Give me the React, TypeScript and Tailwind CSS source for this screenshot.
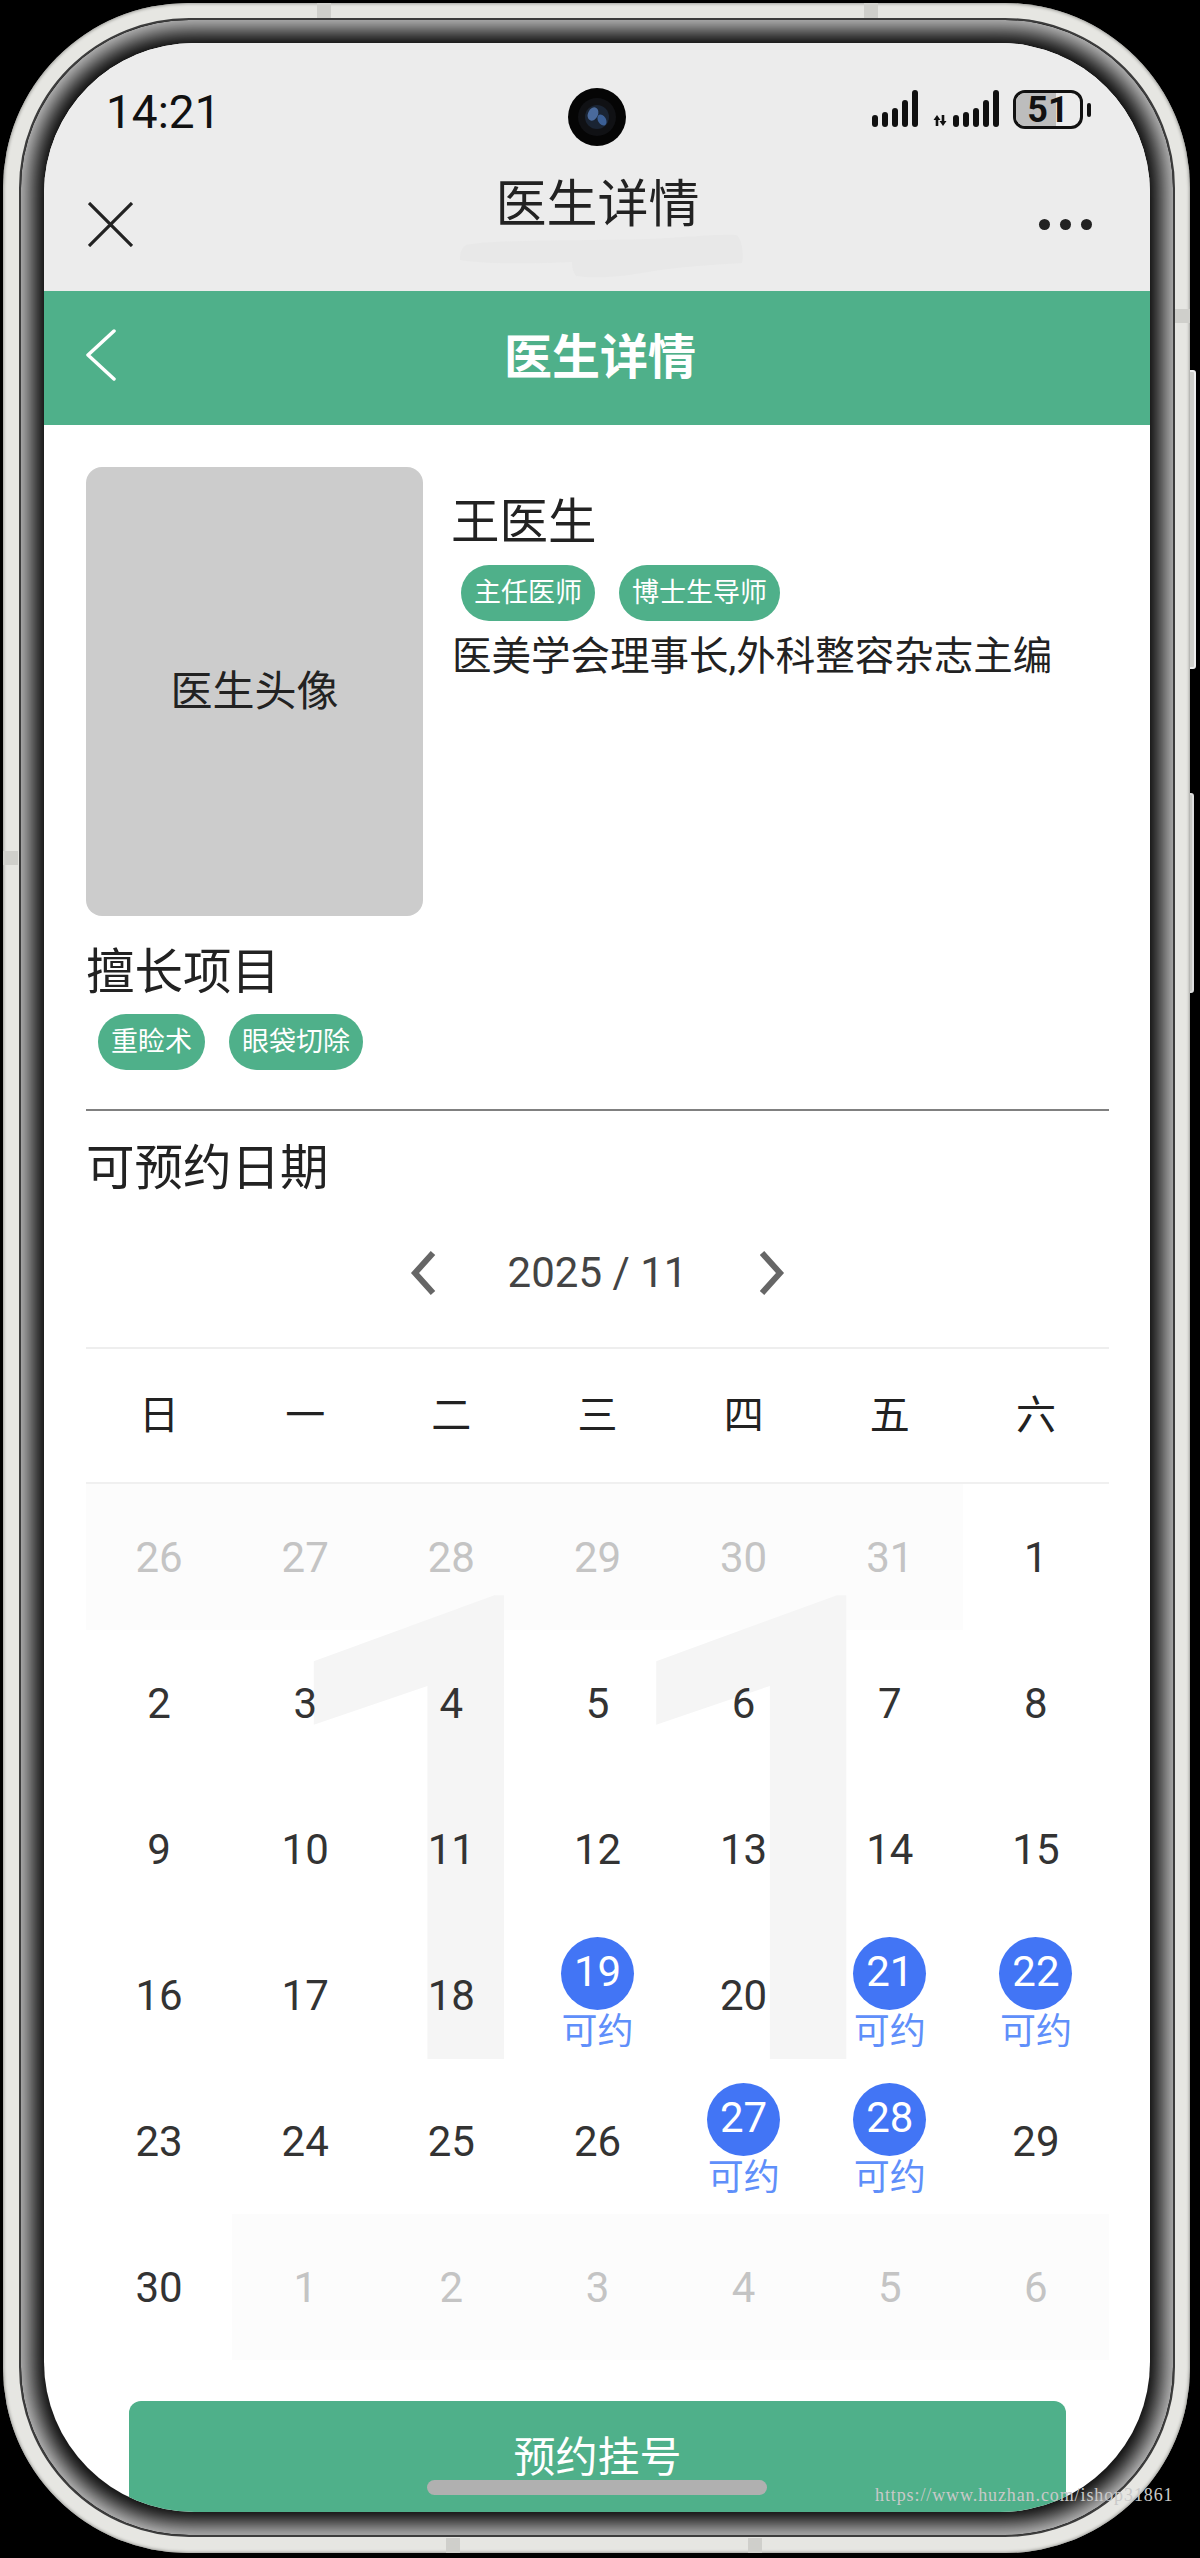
const rows: (number | string)[][] = [
  ["x26", "x27", "x28", "x29", "x30", "x31", 1],
  [2, 3, 4, 5, 6, 7, 8],
  [9, 10, 11, 12, 13, 14, 15],
  [16, 17, 18, 19, 20, 21, 22],
  [23, 24, 25, 26, 27, 28, 29],
  [30, "x1", "x2", "x3", "x4", "x5", "x6"],
];
const bookable = [19, 21, 22, 27, 28];
const week = ["日", "一", "二", "三", "四", "五", "六"];

function Tag({ children }: { children: React.ReactNode }) {
  return (
    <span className="flex h-[56px] items-center rounded-full bg-[#4fb08a] px-[13px] text-[27px] leading-none text-white">
      {children}
    </span>
  );
}

function DayCell({ value }: { value: number | string }) {
  if (typeof value === "string") {
    return (
      <div className="flex h-[146px] items-center justify-center bg-black/[0.012] text-[42px] text-[#c4c4c4]">
        {value.slice(1)}
      </div>
    );
  }
  if (bookable.includes(value)) {
    return (
      <div className="relative flex h-[146px] flex-col items-center pt-[15px]">
        <div className="flex h-[73px] w-[73px] items-center justify-center rounded-full bg-[#4275f5] pb-[4px] text-[42px] text-white">
          {value}
        </div>
        <div className="mt-[2px] text-[36px] leading-[40px] text-[#5f8ffa]">可约</div>
      </div>
    );
  }
  return (
    <div className="relative flex h-[146px] items-center justify-center text-[42px] text-[#333]">
      {value}
    </div>
  );
}

function Bars({ x, heights }: { x: number; heights: number[] }) {
  return (
    <>
      {heights.map((h, i) => (
        <rect key={i} x={x + i * 10} y={37 - h} width="6" height={h} rx="3" fill="#111" />
      ))}
    </>
  );
}

function StatusIcons() {
  return (
    <div className="flex items-start">
      <svg width="136" height="40" viewBox="0 0 136 40">
        <Bars x={1} heights={[12, 15, 19, 27, 37]} />
        <path d="M66 25l3.500 5h-2.200v6h-2.600v-6H62.500z" fill="#111" />
        <path d="M72 36l-3.500-5h2.200v-6h2.600v6h2.200z" fill="#111" />
        <Bars x={82} heights={[12, 15, 19, 27, 37]} />
      </svg>
      <div className="relative ml-[6px] flex h-[39px] w-[70px] items-center justify-center overflow-hidden rounded-[12px] border-[3px] border-[#111] text-[36px] font-bold leading-none text-[#111]">
        <div className="absolute inset-y-0 left-0 w-[40px] bg-[#bdbdbd]" />
        <span className="relative">51</span>
      </div>
      <div className="ml-[4px] mt-[13px] h-[14px] w-[4px] rounded-full bg-[#111]" />
    </div>
  );
}

export default function App() {
  return (
    <div
      className="relative h-[2558px] w-[1200px] overflow-hidden bg-black pl-[3px] pt-[3px]"
      style={{ fontFamily: 'Roboto, "Noto Sans CJK SC", sans-serif' }}
    >
      {/* side keys */}
      <div className="absolute left-[1186px] top-[370px] h-[299px] w-[10px] rounded-[3px] border-2 border-[#eee] bg-[#cfcfcb]" />
      <div className="absolute left-[1186px] top-[793px] h-[200px] w-[8px] rounded-[3px] border-2 border-[#ddd] bg-[#c8c8c4]" />

      {/* phone frame */}
      <div className="relative h-[2550px] w-[1187px] rounded-[185px] bg-[#e6e6e2] pb-[16px] pl-[16px] pr-[15px] pt-[15px] shadow-[inset_0_0_3px_1px_#a0a09c]">
        <div className="absolute left-[314px] top-0 h-[15px] w-[14px] bg-[#cfcfcb]" />
        <div className="absolute left-[861px] top-0 h-[15px] w-[14px] bg-[#cfcfcb]" />
        <div className="absolute left-[443px] bottom-0 h-[15px] w-[14px] bg-[#cfcfcb]" />
        <div className="absolute left-[745px] bottom-0 h-[15px] w-[14px] bg-[#cfcfcb]" />
        <div className="absolute left-0 top-[848px] h-[14px] w-[15px] bg-[#cfcfcb]" />
        <div className="absolute right-0 top-[306px] h-[14px] w-[15px] bg-[#cfcfcb]" />

        <div className="h-full w-full rounded-[170px] border-2 border-[#3c3c3c] bg-black p-[23px] shadow-[inset_0_0_24px_10px_#d0d0d0]">
          {/* screen */}
          <div className="relative h-full w-full overflow-hidden rounded-[150px] bg-white">
            {/* wechat title area */}
            <div className="relative h-[248px] bg-[#ececec]">
              <div className="flex h-[141px] items-start justify-between pl-[62px] pr-[59px] pt-[46px]">
                <span className="text-[46px] leading-[46px] text-[#111]">14:21</span>
                <div className="mt-[1px]">
                  <StatusIcons />
                </div>
              </div>
              <div className="flex h-[80px] items-center pl-[44px] pr-[58px]">
                <svg width="45" height="45" viewBox="0 0 45 45" stroke="#222" strokeWidth="3.200" fill="none">
                  <path d="M1 1l43 43M44 1L1 44" />
                </svg>
                <span className="-mt-[40px] ml-[23px] flex-1 text-center text-[51px] leading-none text-[#222]">医生详情</span>
                <div className="flex gap-[10px]">
                  <span className="h-[11px] w-[11px] rounded-full bg-[#222]" />
                  <span className="h-[11px] w-[11px] rounded-full bg-[#222]" />
                  <span className="h-[11px] w-[11px] rounded-full bg-[#222]" />
                </div>
              </div>
              {/* painted-out subtitle */}
              <svg className="absolute left-[414px] top-[188px]" width="290" height="50" viewBox="0 0 290 50" fill="#e8e8e8">
                <path d="M8 14C40 8 130 10 190 8c30-1 70-5 88-4 6 2 8 20 6 28-30 2-70 4-100 10-30 5-50 5-66 3-4-6-4-10-4-14-40 2-90 2-112-2C2 24 2 18 8 14z" />
              </svg>
              {/* front camera */}
              <svg className="absolute left-[524px] top-[45px]" width="58" height="58" viewBox="0 0 58 58">
                <circle cx="29" cy="29" r="29" fill="#050505" />
                <circle cx="29" cy="29" r="19" fill="#101114" />
                <circle cx="29" cy="29" r="12" fill="#1a2433" />
                <ellipse cx="25" cy="26" rx="5" ry="7" fill="#4a6a9c" transform="rotate(25 25 26)" />
                <ellipse cx="34" cy="32" rx="4" ry="6" fill="#3b5f95" transform="rotate(-30 34 32)" />
              </svg>
            </div>

            {/* green header */}
            <div className="flex h-[134px] items-center bg-[#4fb08a] pl-[42px]">
              <svg className="-mt-[6px]" width="30" height="52" viewBox="0 0 30 52" stroke="#fff" strokeWidth="3.500" strokeLinecap="round" strokeLinejoin="round" fill="none">
                <path d="M28 2L2 26l26 24" />
              </svg>
              <span className="flex-1 text-center text-[48px] font-bold leading-none text-white">医生详情</span>
              <div className="w-[66px]" />
            </div>

            <div className="pl-[42px] pr-[41px] pt-[42px] text-[#222]">
              {/* doctor info */}
              <div className="flex gap-[28px]">
                <div className="flex h-[449px] w-[337px] shrink-0 items-center justify-center rounded-[16px] bg-[#cccccc] text-[42px] text-[#222]">
                  医生头像
                </div>
                <div className="pt-[32px]">
                  <div className="text-[48.500px] leading-[48px]">王医生</div>
                  <div className="ml-[10px] mt-[18px] flex gap-[24px]">
                    <Tag>主任医师</Tag>
                    <Tag>博士生导师</Tag>
                  </div>
                  <div className="ml-[1px] mt-[16px] text-[39.500px] leading-[39px]">医美学会理事长,外科整容杂志主编</div>
                </div>
              </div>

              <div className="mt-[33px] text-[48.500px] leading-[48px]">擅长项目</div>
              <div className="ml-[12px] mt-[17px] flex gap-[24px]">
                <Tag>重睑术</Tag>
                <Tag>眼袋切除</Tag>
              </div>
              <div className="mt-[39px] h-[2px] bg-[#808080]" />

              <div className="mt-[34px] text-[48.500px] leading-[48px]">可预约日期</div>

              {/* month switcher */}
              <div className="mt-[58px] flex h-[44px] items-center justify-center">
                <svg width="26" height="44" viewBox="0 0 26 44" stroke="#666" strokeWidth="6" fill="none">
                  <path d="M23 2L5 22l18 20" />
                </svg>
                <span className="mx-[72px] text-[42px] leading-none text-[#444]">2025 / 11</span>
                <svg width="26" height="44" viewBox="0 0 26 44" stroke="#666" strokeWidth="6" fill="none">
                  <path d="M3 2l18 20L3 42" />
                </svg>
              </div>
              <div className="mt-[52px] h-[2px] bg-[#eeeeee]" />

              {/* calendar */}
              <div className="grid h-[135px] grid-cols-7 items-center border-b-2 border-[#f0f0f0] text-center text-[40px] leading-none text-[#222]">
                {week.map((d) => (
                  <div key={d}>{d}</div>
                ))}
              </div>
              <div className="relative grid grid-cols-7">
                <div className="pointer-events-none absolute left-[174px] top-[28px] select-none text-[650px] font-[550] leading-none tracking-[-27px] text-[#f5f5f5]">
                  11
                </div>
                {rows.flat().map((v, i) => (
                  <DayCell key={i} value={v} />
                ))}
              </div>

              <div className="mx-[43px] mt-[41px] flex h-[112px] items-center justify-center rounded-[12px] bg-[#4fb08a] pt-[2px] text-[42px] leading-none text-white">
                预约挂号
              </div>
            </div>

            {/* home indicator */}
            <div className="absolute bottom-[17px] left-[383px] h-[15px] w-[340px] rounded-full bg-[#b0b0b0]" />
          </div>
        </div>
      </div>

      {/* site watermark */}
      <div
        className="absolute left-[875px] top-[2484px] whitespace-nowrap text-[18px] leading-[22px] tracking-[0.900px] text-[#c9c9c9]"
        style={{ fontFamily: '"Liberation Serif", serif' }}
      >
        https://www.huzhan.com/ishop31861
      </div>
    </div>
  );
}
